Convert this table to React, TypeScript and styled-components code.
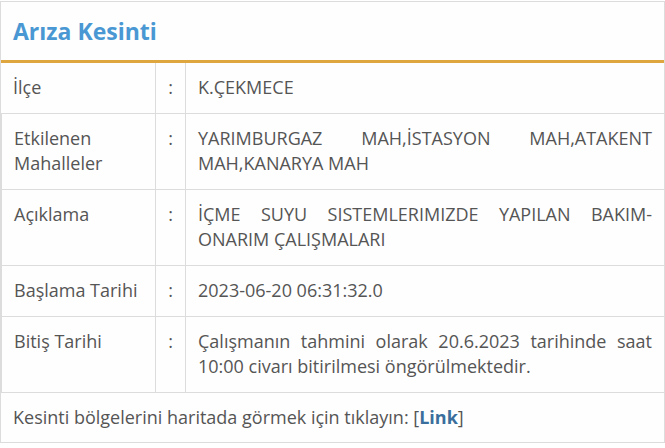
import React from "react";
import styled, { createGlobalStyle } from "styled-components";

const Global = createGlobalStyle`
  html, body { margin: 0; padding: 0; background: #fff; }
  body { font-family: "Open Sans", "Noto Sans", sans-serif; }
`;

const Panel = styled.div`
  width: 665px;
  box-sizing: border-box;
  margin-top: 1px;
  border: 1px solid #dcdcdc;
  background: #fefefe;
`;

const Header = styled.div`
  height: 58px;
  display: flex;
  align-items: center;
  padding: 0 12px;
  border-bottom: 3px solid #dfa640;
`;

const Title = styled.h2`
  margin: 0;
  font-size: 23px;
  font-weight: 700;
  color: #4a98d3;
`;

const Table = styled.div`
  display: grid;
  grid-template-columns: 154px 30px 1fr;
`;

const Cell = styled.div<{ $justify?: boolean; $center?: boolean }>`
  padding: 12px 12px 13px;
  font-size: 18px;
  line-height: 25px;
  color: #555;
  border-bottom: 1px solid #dcdcdc;
  text-align: ${(p) => (p.$justify ? "justify" : p.$center ? "center" : "left")};
  & + & { border-left: 1px solid #dcdcdc; }
`;

const ColonCell = styled(Cell)`
  padding-left: 0;
  padding-right: 0;
`;

const Footer = styled.div`
  padding: 12px 12px 12px;
  font-size: 18px;
  line-height: 25px;
  color: #555;
`;

const LinkText = styled.a`
  color: #3a6e9c;
  font-weight: 700;
  text-decoration: none;
`;

const rows: [string, string][] = [
  ["İlçe", "K.ÇEKMECE"],
  ["Etkilenen Mahalleler", "YARIMBURGAZ MAH,İSTASYON MAH,ATAKENT MAH,KANARYA MAH"],
  ["Açıklama", "İÇME SUYU SISTEMLERIMIZDE YAPILAN BAKIM-ONARIM ÇALIŞMALARI"],
  ["Başlama Tarihi", "2023-06-20 06:31:32.0"],
  ["Bitiş Tarihi", "Çalışmanın tahmini olarak 20.6.2023 tarihinde saat 10:00 civarı bitirilmesi öngörülmektedir."],
];

export default function App() {
  return (
    <>
      <Global />
      <Panel>
        <Header>
          <Title>Arıza Kesinti</Title>
        </Header>
        <Table>
          {rows.map(([k, v]) => (
            <React.Fragment key={k}>
              <Cell>{k}</Cell>
              <ColonCell $center>:</ColonCell>
              <Cell $justify>{v}</Cell>
            </React.Fragment>
          ))}
        </Table>
        <Footer>
          Kesinti bölgelerini haritada görmek için tıklayın: [<LinkText href="#">Link</LinkText>]
        </Footer>
      </Panel>
    </>
  );
}
